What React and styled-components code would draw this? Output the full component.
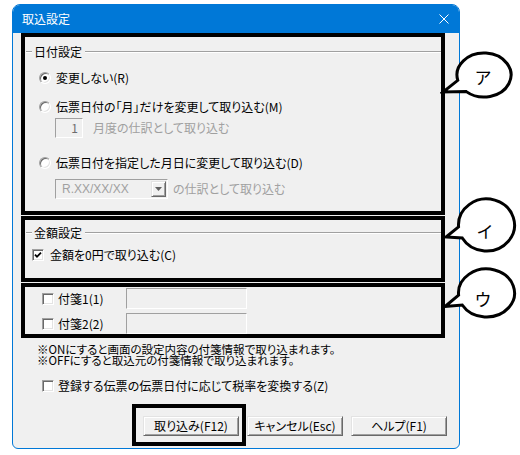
import React from 'react';
import styled, { createGlobalStyle } from 'styled-components';

const GlobalStyle = createGlobalStyle`
  html, body {
    margin: 0;
    padding: 0;
    background: #fff;
  }
  body {
    font-family: "Noto Sans CJK JP", "Noto Sans", sans-serif;
    font-size: 12px;
    font-feature-settings: "palt";
    color: #000;
  }
`;

const Page = styled.div`
  position: relative;
  width: 520px;
  height: 455px;
  padding: 4px 0 0 12px;
  box-sizing: border-box;
  overflow: hidden;
`;

const Window = styled.div`
  width: 448px;
  height: 445px;
  box-sizing: border-box;
  border: 1px solid #0078d7;
  border-radius: 8px 8px 6px 6px;
  background: #f0f0f0;
  display: flex;
  flex-direction: column;
  overflow: hidden;
`;

const TitleBar = styled.div`
  height: 28px;
  flex: none;
  background: #0078d7;
  color: #fff;
  display: flex;
  align-items: center;
  justify-content: space-between;
  padding: 0 10px 0 9px;
  line-height: 1;
`;

const Content = styled.div`
  display: flex;
  flex-direction: column;
  padding: 0 14px 0 8px;
`;

// black annotation frame drawn around each part of the dialog
const Marked = styled.section`
  border: 4px solid #000;
  box-sizing: border-box;
  height: ${p => p.$h}px;
  margin-top: ${p => p.$mt || 0}px;
  display: flex;
  flex-direction: column;
`;

const GroupHead = styled.div`
  display: flex;
  align-items: center;
  height: 16px;
  margin-top: ${p => p.$mt}px;
  line-height: 16px;
  &::before,
  &::after {
    content: '';
    height: 0;
    border-top: 1px solid #a0a0a0;
    border-bottom: 1px solid #fff;
  }
  &::before {
    width: 6px;
    margin: 0 2px 0 1px;
  }
  &::after {
    flex: 1;
    margin-left: 3px;
  }
`;

const Row = styled.div`
  display: flex;
  align-items: center;
  height: ${p => p.$h || 16}px;
  margin-top: ${p => p.$mt || 0}px;
  padding-left: ${p => p.$indent || 0}px;
  gap: ${p => (p.$gap == null ? 5 : p.$gap)}px;
  line-height: 16px;
  white-space: nowrap;
`;

const Radio = styled.span`
  position: relative;
  flex: none;
  width: 12px;
  height: 12px;
  box-sizing: border-box;
  border-radius: 50%;
  background: #fff;
  border: 1px solid;
  border-color: #a0a0a0 #fff #fff #a0a0a0;
  box-shadow: inset 1px 1px 0 #696969, inset -1px -1px 0 #e3e3e3;
  &::after {
    content: '';
    display: ${p => (p.$checked ? 'block' : 'none')};
    position: absolute;
    left: 3px;
    top: 3px;
    width: 4px;
    height: 4px;
    border-radius: 50%;
    background: #000;
  }
`;

const Box = styled.span`
  flex: none;
  width: 12px;
  height: 12px;
  box-sizing: border-box;
  background: #fff;
  border: 1px solid;
  border-color: #a0a0a0 #fff #fff #a0a0a0;
  box-shadow: inset 1px 1px 0 #696969, inset -1px -1px 0 #e3e3e3;
  display: flex;
  align-items: center;
  justify-content: center;
`;

function Check({ checked }) {
  return (
    <Box>
      {checked ? (
        <svg width="8" height="8" viewBox="0 0 8 8">
          <polyline points="1,3.6 3,5.8 7,1.6" fill="none" stroke="#000" strokeWidth="1.8" />
        </svg>
      ) : null}
    </Box>
  );
}

const Dim = styled.span`
  color: #a0a0a0;
  margin-left: ${p => p.$ml || 0}px;
`;

const Sunken = styled.span`
  flex: none;
  box-sizing: border-box;
  width: ${p => p.$w}px;
  height: ${p => p.$h || 20}px;
  border: 1px solid;
  border-color: #a0a0a0 #fff #fff #a0a0a0;
  background: #f0f0f0;
  display: flex;
  align-items: center;
  justify-content: ${p => (p.$right ? 'flex-end' : 'flex-start')};
  padding: ${p => (p.$right ? '0 4px 0 0' : '0 1px 0 6px')};
  color: #6d6d6d;
`;

const ComboText = styled.span`
  flex: 1;
  font-family: "Liberation Sans", Arial, sans-serif;
  color: #a0a0a0;
`;

const ComboButton = styled.span`
  width: 15px;
  height: 16px;
  box-sizing: border-box;
  border: 1px solid;
  border-color: #e3e3e3 #696969 #696969 #e3e3e3;
  box-shadow: inset 1px 1px 0 #fff, inset -1px -1px 0 #a0a0a0;
  background: #f0f0f0;
  display: flex;
  align-items: center;
  justify-content: center;
`;

const TagLabel = styled.span`
  width: 68px;
  margin-left: 4px;
`;

const Notes = styled.p`
  margin: 6px 0 0 16px;
  font-size: 11.5px;
  line-height: 11px;
  white-space: nowrap;
`;

const ButtonRow = styled.div`
  display: flex;
  justify-content: flex-end;
  gap: 8px;
  margin: 22px -2px 0 0;
`;

const Button = styled.button`
  width: 96px;
  height: 20px;
  box-sizing: border-box;
  padding: 0;
  font: inherit;
  line-height: 16px;
  color: #000;
  background: #f0f0f0;
  border: 1px solid;
  border-color: #e3e3e3 #696969 #696969 #e3e3e3;
  box-shadow: inset 1px 1px 0 #fff, inset -1px -1px 0 #a0a0a0;
`;

const MarkedButton = styled.span`
  position: relative;
  display: flex;
  &::after {
    content: '';
    position: absolute;
    top: -12px;
    left: -11px;
    right: -7px;
    bottom: -10px;
    border: 4px solid #000;
  }
`;

const CalloutBox = styled.div`
  position: absolute;
  left: ${p => p.$x}px;
  top: ${p => p.$y}px;
  width: ${p => p.$w}px;
  height: ${p => p.$h}px;
  svg {
    display: block;
  }
`;

const CalloutLabel = styled.span`
  position: absolute;
  left: ${p => p.$x}px;
  top: ${p => p.$y}px;
  transform: translate(-50%, -50%);
  font-size: 17px;
  line-height: 1;
  font-feature-settings: normal;
`;

function Callout({ label, cx, cy, rx, ry, from, to, tip, text }) {
  const x0 = tip[0] - 3;
  const y0 = cy - ry - 3;
  const w = cx + rx + 3 - x0;
  const h = Math.max(cy + ry, tip[1]) + 3 - y0;
  const pt = deg => {
    const a = (deg * Math.PI) / 180;
    return [cx - x0 + rx * Math.cos(a), cy - y0 + ry * Math.sin(a)];
  };
  const [ux, uy] = pt(from);
  const [lx, ly] = pt(to);
  const d = `M ${ux} ${uy} A ${rx} ${ry} 0 1 1 ${lx} ${ly} L ${tip[0] - x0} ${tip[1] - y0} Z`;
  return (
    <CalloutBox $x={x0} $y={y0} $w={w} $h={h}>
      <svg width={w} height={h} viewBox={`0 0 ${w} ${h}`}>
        <path d={d} fill="#fff" stroke="#000" strokeWidth="3" strokeLinejoin="miter" />
      </svg>
      <CalloutLabel $x={text[0] - x0} $y={text[1] - y0}>
        {label}
      </CalloutLabel>
    </CalloutBox>
  );
}

export default function App() {
  return (
    <Page>
      <GlobalStyle />
      <Window>
        <TitleBar>
          <span>取込設定</span>
          <svg width="10" height="10" viewBox="0 0 10 10">
            <path d="M0.5 0.5 L9.5 9.5 M9.5 0.5 L0.5 9.5" stroke="#fff" strokeWidth="1" />
          </svg>
        </TitleBar>
        <Content>
          <Marked $h={182}>
            <GroupHead $mt={7}>日付設定</GroupHead>
            <Row $mt={10} $indent={14}>
              <Radio $checked />
              <span>変更しない(R)</span>
            </Row>
            <Row $mt={13} $indent={14}>
              <Radio />
              <span>伝票日付の「月」だけを変更して取り込む(M)</span>
            </Row>
            <Row $mt={3} $h={20} $indent={30} $gap={0}>
              <Sunken $w={28} $right>1</Sunken>
              <Dim $ml={10}>月度の仕訳として取り込む</Dim>
            </Row>
            <Row $mt={17} $indent={14}>
              <Radio />
              <span>伝票日付を指定した月日に変更して取り込む(D)</span>
            </Row>
            <Row $mt={8} $h={20} $indent={30} $gap={0}>
              <Sunken $w={113}>
                <ComboText>R.XX/XX/XX</ComboText>
                <ComboButton>
                  <svg width="7" height="4" viewBox="0 0 7 4">
                    <path d="M0 0 H7 L3.5 4 Z" fill="#606060" />
                  </svg>
                </ComboButton>
              </Sunken>
              <Dim $ml={5}>の仕訳として取り込む</Dim>
            </Row>
          </Marked>

          <Marked $h={66} $mt={1}>
            <GroupHead $mt={5}>金額設定</GroupHead>
            <Row $mt={6} $indent={7} $gap={6}>
              <Check checked />
              <span>金額を0円で取り込む(C)</span>
            </Row>
          </Marked>

          <Marked $h={55} $mt={1}>
            <Row $mt={1} $h={21} $indent={17} $gap={0}>
              <Check />
              <TagLabel>付箋1(1)</TagLabel>
              <Sunken $w={121} $h={21} />
            </Row>
            <Row $mt={4} $h={21} $indent={17} $gap={0}>
              <Check />
              <TagLabel>付箋2(2)</TagLabel>
              <Sunken $w={121} $h={21} />
            </Row>
          </Marked>

          <Notes>
            ※ONにすると画面の設定内容の付箋情報で取り込まれます。
            <br />
            ※OFFにすると取込元の付箋情報で取り込まれます。
          </Notes>

          <Row $mt={12} $indent={21} $gap={4}>
            <Check />
            <span>登録する伝票の伝票日付に応じて税率を変換する(Z)</span>
          </Row>

          <ButtonRow>
            <MarkedButton>
              <Button>取り込み(F12)</Button>
            </MarkedButton>
            <Button>キャンセル(Esc)</Button>
            <Button>ヘルプ(F1)</Button>
          </ButtonRow>
        </Content>
      </Window>

      <Callout label="ア" cx={484} cy={75} rx={27} ry={22} from={166} to={131} tip={[443, 92]} text={[483, 76]} />
      <Callout label="イ" cx={486.5} cy={225} rx={28} ry={26} from={176} to={150} tip={[446, 237]} text={[485, 230]} />
      <Callout label="ウ" cx={486.5} cy={292.5} rx={28} ry={24} from={175} to={150} tip={[445, 306]} text={[483, 298]} />
    </Page>
  );
}
